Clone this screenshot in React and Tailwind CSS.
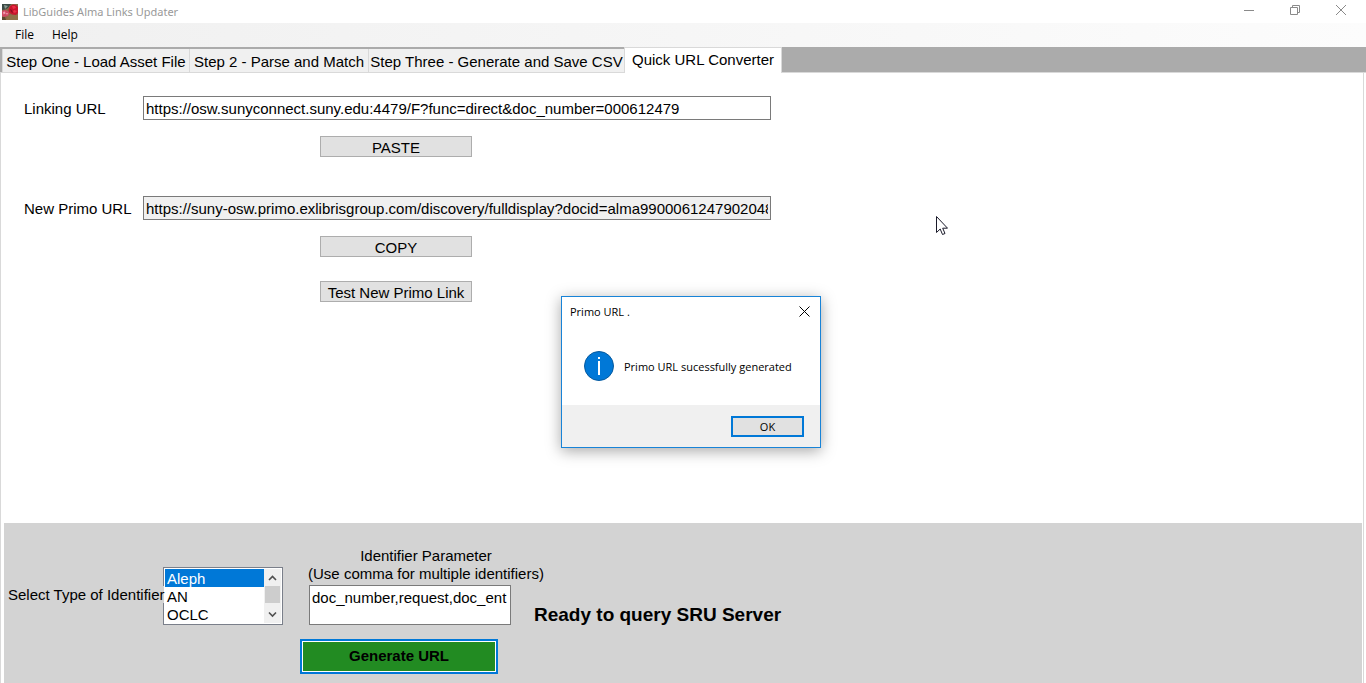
import React from "react";

const tabs = [
  { name: "Step One - Load Asset File", width: "w-[187px]" },
  { name: "Step 2 - Parse and Match", width: "w-[179px]" },
  { name: "Step Three - Generate and Save CSV", width: "w-[256px]" },
];

function AppIcon() {
  return (
    <svg className="size-4" viewBox="0 0 16 16" aria-hidden="true">
      <rect width="16" height="16" fill="#8a6a48" />
      <path d="M0 0h9L6 4 3 5.500 0 6z" fill="#3b4a45" />
      <path d="M2 1l4 1-3 3z" fill="#8d9b94" />
      <path d="M6 11h10v5H4z" fill="#8f7248" />
      <path d="M8 2l3-1.500 3 .5 2 2v6l-2 2-4-.5-3-2-.5-3z" fill="#c8152c" />
      <path d="M10 2l3 0 1 2-3 1zM12 6l3 1-2 2-2-1z" fill="#ec2f45" />
      <path d="M8 5l2 1 1 3-2-1z" fill="#8f0d20" />
      <path d="M0 7l3-1 3 1 1.500 2L6 12l-4 1-2-1z" fill="#cf4a63" />
      <path d="M1 8l2-.5.5 2-2 1zM4 9l2 0-1 2z" fill="#f0a0b0" />
      <path d="M0 13l3 0 1 3H0z" fill="#5b4a30" />
    </svg>
  );
}

function TitleBar() {
  return (
    <header className="flex h-[23px] items-start justify-between bg-white font-['Noto_Sans',sans-serif] text-[11px] text-[#999999]">
      <div className="flex items-center gap-[5px] pt-[3px] pl-0.5">
        <AppIcon />
        <h1 className="pt-px leading-4">LibGuides Alma Links Updater</h1>
      </div>
      <div className="flex h-5 items-center pr-0.5 text-[#8a8a8a]">
        <button aria-label="Minimize" className="flex w-[46px] justify-center">
          <svg width="10" height="10" viewBox="0 0 10 10" stroke="currentColor"><path d="M0 5.500h10" /></svg>
        </button>
        <button aria-label="Restore" className="flex w-[46px] justify-center">
          <svg width="10" height="10" viewBox="0 0 10 10" fill="none" stroke="currentColor"><path d="M.5 2.500h7v7h-7zM2.500 2.500v-2h7v7h-2" /></svg>
        </button>
        <button aria-label="Close" className="flex w-[46px] justify-center">
          <svg width="10" height="10" viewBox="0 0 10 10" stroke="currentColor"><path d="M0 0l10 10M10 0L0 10" /></svg>
        </button>
      </div>
    </header>
  );
}

function MenuBar() {
  return (
    <nav className="flex h-6 items-center gap-[18px] bg-linear-to-r from-[#f0f0f0] to-[#fcfcfc] pl-[15px] font-['Open_Sans',sans-serif] text-[12px]">
      <button>File</button>
      <button>Help</button>
    </nav>
  );
}

function TabStrip() {
  return (
    <div role="tablist" className="flex h-[26px] items-end border-b border-[#d9d9d9] bg-[#ababab] pl-0.5">
      {tabs.map((tab) => (
        <button key={tab.name} role="tab" aria-selected="false" className={`h-[23px] border-l border-[#d9d9d9] bg-[#f0f0f0] pt-0.5 leading-5 whitespace-nowrap ${tab.width}`}>
          {tab.name}
        </button>
      ))}
      <button role="tab" aria-selected="true" className="-mb-px h-[26px] w-[158px] border-x border-t border-[#d9d9d9] bg-white pb-0.5 leading-[22px] whitespace-nowrap">
        Quick URL Converter
      </button>
    </div>
  );
}

function PushButton({ children }) {
  return (
    <button className="ml-[177px] h-[21px] w-[152px] border border-[#adadad] bg-[#e1e1e1] pt-0.5 leading-[18px]">
      {children}
    </button>
  );
}

function Converter() {
  return (
    <div className="grid grid-cols-[119px_628px] items-center pt-[23px] pl-[23px]">
      <label htmlFor="linking" className="pt-0.5 leading-[22px]">Linking URL</label>
      <input id="linking" className="h-6 border border-[#7a7a7a] bg-white px-0.5" defaultValue="https://osw.sunyconnect.suny.edu:4479/F?func=direct&doc_number=000612479" />
      <div className="col-start-2 mt-4 mb-[39px] flex"><PushButton>PASTE</PushButton></div>
      <label htmlFor="primo" className="pt-0.5 leading-[22px]">New Primo URL</label>
      <input id="primo" readOnly className="h-6 border border-[#7a7a7a] bg-[#f0f0f0] px-0.5" defaultValue="https://suny-osw.primo.exlibrisgroup.com/discovery/fulldisplay?docid=alma990006124790204855" />
      <div className="col-start-2 mt-4 flex flex-col gap-6">
        <PushButton>COPY</PushButton>
        <PushButton>Test New Primo Link</PushButton>
      </div>
    </div>
  );
}

function IdentifierList() {
  return (
    <div className="flex h-[58px] w-[120px] border border-[#7a7f8a] bg-white p-px">
      <select id="idtype" size="3" defaultValue="Aleph" className="h-[54px] min-w-0 flex-1 appearance-none overflow-hidden bg-white outline-none">
        {["Aleph", "AN", "OCLC"].map((o) => (
          <option key={o} className="h-[18px] min-h-0 px-0.5 pt-px pb-0 leading-[18px] checked:bg-[#0078d7] checked:text-white">{o}</option>
        ))}
      </select>
      <div aria-hidden="true" className="flex w-[17px] flex-col items-center bg-[#f0f0f0]">
        <svg className="h-[17px] w-[9px]" viewBox="0 0 9 17" fill="none" stroke="#505050" strokeWidth="1.600"><path d="M1 11l3.500-3.500L8 11" /></svg>
        <div className="h-[17px] w-[15px] bg-[#cdcdcd]" />
        <svg className="h-5 w-[9px]" viewBox="0 0 9 20" fill="none" stroke="#505050" strokeWidth="1.600"><path d="M1 9.500l3.500 3.500L8 9.500" /></svg>
      </div>
    </div>
  );
}

function QueryPanel() {
  return (
    <section className="mr-px ml-[3px] flex h-40 items-start bg-[#d3d3d3] pl-1">
      <div className="flex items-center pt-11">
        <label htmlFor="idtype" className="relative z-10 w-[155px] pb-0.5 whitespace-nowrap">
          <span className="bg-[#d3d3d3]">Select Type of Identifier</span>
        </label>
        <IdentifierList />
      </div>
      <div className="ml-[17px] grid grid-cols-[211px_auto] pt-6">
        <label htmlFor="params" className="col-span-2 w-[252px] text-center leading-[18px] whitespace-nowrap">
          Identifier Parameter
          <br />
          (Use comma for multiple identifiers)
        </label>
        <textarea id="params" className="mt-0.5 ml-[9px] block h-10 resize-none overflow-hidden border border-[#7a7a7a] bg-white px-0.5 pt-[3px] leading-[18px]" defaultValue="doc_number,request,doc_ent" />
        <p className="self-end pl-[23px] text-[19px] leading-5 font-bold whitespace-nowrap">Ready to query SRU Server</p>
        <button className="mt-3.5 h-[35px] w-[198px] border-2 border-[#0078d7] bg-white p-px font-bold">
          <span className="flex h-full items-center justify-center bg-[#228b22]">Generate URL</span>
        </button>
      </div>
    </section>
  );
}

function MessageDialog() {
  return (
    <div role="dialog" aria-label="Primo URL ." className="absolute top-[296px] left-[561px] flex h-[152px] w-[260px] flex-col border border-[#1883d7] bg-white font-['Open_Sans',sans-serif] text-[11px] shadow-[0_3px_14px_rgba(0,0,0,0.35)]">
      <div className="flex h-7 items-center justify-between pr-2.5 pl-2">
        <h2 className="pt-0.5">Primo URL .</h2>
        <button aria-label="Close message">
          <svg width="11" height="11" viewBox="0 0 11 11" stroke="#000"><path d="M.5.5l10 10M10.500.5l-10 10" /></svg>
        </button>
      </div>
      <div className="flex flex-1 items-center gap-2.5 pt-0.5 pl-[22px]">
        <svg className="size-[30px]" viewBox="0 0 30 30" aria-hidden="true">
          <circle cx="15" cy="15" r="14.500" fill="#0078d7" stroke="#075a9e" />
          <path d="M14 6h2v2h-2zM14 10h2v14h-2z" fill="#fff" />
        </svg>
        <p className="pt-0.5">Primo URL sucessfully generated</p>
      </div>
      <div className="flex h-[42px] items-center justify-end bg-[#f0f0f0] pr-4">
        <button className="h-[21px] w-[73px] border-2 border-[#0078d7] bg-[#e1e1e1] pt-px leading-4">OK</button>
      </div>
    </div>
  );
}

export default function App() {
  return (
    <div className="relative flex min-h-screen flex-col bg-white font-['Liberation_Sans',Arial,sans-serif] text-[15px] text-black">
      <TitleBar />
      <MenuBar />
      <TabStrip />
      <main className="mr-0.5 flex flex-1 flex-col justify-between border-x border-[#d9d9d9]">
        <Converter />
        <QueryPanel />
      </main>
      <MessageDialog />
      <svg className="absolute top-[216px] left-[936px]" width="12" height="20" viewBox="0 0 12 20" aria-hidden="true">
        <path d="M.5.5v16l3.700-3.500 2.300 5.500 2.500-1-2.300-5.300h4.800z" fill="#fff" stroke="#1a1a2a" />
      </svg>
    </div>
  );
}
